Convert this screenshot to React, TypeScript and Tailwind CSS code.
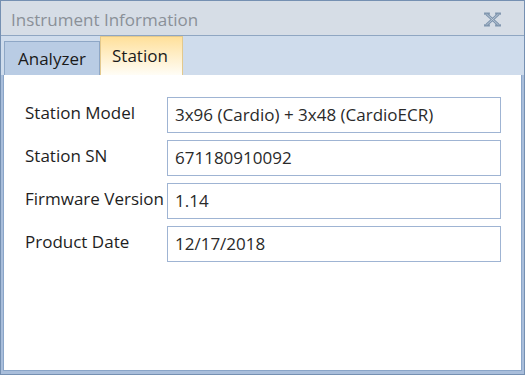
import React from "react";

const rows: [string, string][] = [
  ["Station Model", "3x96 (Cardio) + 3x48 (CardioECR)"],
  ["Station SN", "671180910092"],
  ["Firmware Version", "1.14"],
  ["Product Date", "12/17/2018"],
];

export default function App() {
  return (
    <div className="w-[525px] h-[375px] flex flex-col bg-[#cfdcec] border border-[#7590b2] font-['Open_Sans',sans-serif] overflow-hidden">
      <div className="h-[35px] shrink-0 bg-[#d6dde6] border-b border-[#8fa6c2] flex items-center justify-between pl-[10px] pr-[22px]">
        <span className="text-[17px] text-[#8a9098] leading-none mt-[2px]">Instrument Information</span>
        <svg width="19" height="15" viewBox="0 0 18 14" className="mt-[2px]">
          <g stroke="#7f95ae" strokeWidth="2.8" strokeLinecap="butt" fill="none">
            <path d="M3.5 2 L14.5 12 M14.5 2 L3.5 12" />
            <path d="M1 1.5 H6.5 M11.5 1.5 H17 M1 12.5 H6.5 M11.5 12.5 H17" strokeWidth="2.2" />
          </g>
          <g stroke="#c3cfdd" strokeWidth="0.8" fill="none">
            <path d="M3.5 2 L14.5 12 M14.5 2 L3.5 12" />
          </g>
        </svg>
      </div>
      <div className="h-[39px] shrink-0 flex items-end pl-[3px]">
        <div className="h-[34px] w-[96px] bg-[#b9cce4] border border-b-0 border-[#8ea7c6] flex items-center pl-[13px] text-[17px] text-[#1a1a1a]">
          Analyzer
        </div>
        <div className="h-[39px] w-[83px] bg-gradient-to-b from-[#ffe09a] to-[#fffdf6] border border-b-0 border-[#e3c98e] flex items-center pl-[11px] text-[17px] text-[#1a1a1a]">
          Station
        </div>
      </div>
      <div className="flex-1 flex bg-[#a9bedb] pl-[2px] pr-[2px] pb-[3px]">
        <div className="flex-1 bg-white border-l border-r border-b border-[#8aa5c8] border-t-0 pt-[22px] pl-[21px]">
          <div className="flex flex-col gap-[7px]">
            {rows.map(([label, value]) => (
              <div key={label} className="flex items-center h-[36px]">
                <div className="w-[142px] shrink-0 text-[17px] text-[#1e1e1e] pb-[4px] whitespace-nowrap">{label}</div>
                <div className="w-[334px] h-[36px] border border-[#9fb4d3] flex items-center pl-[7px] text-[17px] text-[#2a2a2a] whitespace-nowrap">
                  {value}
                </div>
              </div>
            ))}
          </div>
        </div>
      </div>
    </div>
  );
}
